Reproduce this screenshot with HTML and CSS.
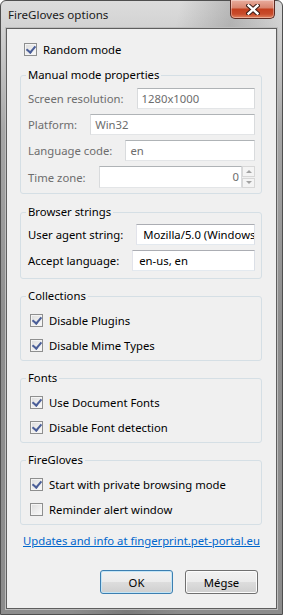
FILE: index.html
```html
<!DOCTYPE html>
<html lang="en">
<head>
    <meta charset="UTF-8">
    <title>FireGloves options</title>
    <link rel="stylesheet" href="styles.css">
</head>
<body>

<div class="window">
    <div class="titlebar">
        <span class="title">FireGloves options</span>
        <span class="close">
            <svg width="14" height="11" viewBox="0 0 14 11">
                <path d="M2.5 1.5 L11.5 9.5 M11.5 1.5 L2.5 9.5" stroke="#3a1a15" stroke-width="4.4" stroke-linecap="square"/>
                <path d="M2.5 1.5 L11.5 9.5 M11.5 1.5 L2.5 9.5" stroke="#fff" stroke-width="2.4" stroke-linecap="square"/>
            </svg>
        </span>
    </div>

    <div class="client">
        <div class="check first"><span class="box on"></span>Random mode</div>

        <!-- Manual mode (disabled while random mode is on) -->
        <fieldset class="group disabled">
            <legend>Manual mode properties</legend>
            <div class="rows">
                <div class="row"><span class="lbl">Screen resolution:</span><div class="field">1280x1000</div></div>
                <div class="row"><span class="lbl">Platform:</span><div class="field">Win32</div></div>
                <div class="row"><span class="lbl">Language code:</span><div class="field">en</div></div>
                <div class="row">
                    <span class="lbl">Time zone:</span>
                    <div class="field num">0</div>
                    <div class="spin">
                        <span class="arrow up"></span>
                        <span class="arrow down"></span>
                    </div>
                </div>
            </div>
        </fieldset>

        <fieldset class="group strings">
            <legend>Browser strings</legend>
            <div class="rows">
                <div class="row"><span class="lbl">User agent string:</span><div class="field">Mozilla/5.0 (Windows</div></div>
                <div class="row"><span class="lbl">Accept language:</span><div class="field">en-us, en</div></div>
            </div>
        </fieldset>

        <fieldset class="group checks">
            <legend>Collections</legend>
            <div class="check"><span class="box on"></span>Disable Plugins</div>
            <div class="check"><span class="box on"></span>Disable Mime Types</div>
        </fieldset>

        <fieldset class="group checks">
            <legend>Fonts</legend>
            <div class="check"><span class="box on"></span>Use Document Fonts</div>
            <div class="check"><span class="box on"></span>Disable Font detection</div>
        </fieldset>

        <fieldset class="group checks">
            <legend>FireGloves</legend>
            <div class="check"><span class="box on"></span>Start with private browsing mode</div>
            <div class="check"><span class="box"></span>Reminder alert window</div>
        </fieldset>

        <a class="link" href="#">Updates and info at fingerprint.pet-portal.eu</a>

        <div class="buttons">
            <button class="btn default">OK</button>
            <button class="btn">Mégse</button>
        </div>
    </div>
</div>

</body>
</html>
```

FILE: styles.css
```css
/* Reset */
* {
    margin: 0;
    padding: 0;
    box-sizing: border-box;
}
body {
    font-family: "Noto Sans", "Open Sans", sans-serif;
    font-size: 11.3px;
    color: #000;
    background: #fff;
}

/* Window frame */
.window {
    width: 283px;
    height: 615px;
    padding: 0 5px 6px;
    border: 1px solid #4f4f4f;
    border-radius: 6px 6px 0 0;
    display: flex;
    flex-direction: column;
    background:
        linear-gradient(100deg, rgba(255,255,255,0) 46%, rgba(60,60,60,0.22) 60%, rgba(255,255,255,0) 74%),
        linear-gradient(to bottom, #dcdcdc 0, #d2d2d2 28px, #a6a6a6 130px, #8e8e8e 320px, #8c8c8c 100%);
}
.titlebar {
    height: 27px;
    display: flex;
    align-items: flex-start;
    padding: 0 2px 0 2px;
}
.title {
    line-height: 28px;
    font-size: 11.6px;
    color: #1a1a1a;
}
.close {
    margin-left: auto;
    margin-top: -1px;
    width: 45px;
    height: 19px;
    display: flex;
    align-items: center;
    justify-content: center;
    border: 1px solid #5c2a22;
    border-top: none;
    border-radius: 0 0 5px 5px;
    background: linear-gradient(to bottom, #e9ad9e 0%, #d98670 42%, #c4401f 52%, #c84b2b 78%, #e0835f 100%);
    box-shadow: inset 0 0 0 1px rgba(255, 255, 255, 0.35);
}

/* Client area */
.client {
    flex: 1;
    display: flex;
    flex-direction: column;
    padding: 12px 14px 14px 13px;
    background: #f0f0f0;
    border: 1px solid #5e5e5e;
    box-shadow: 0 0 0 1px #bdbdbd;
}

/* Checkboxes */
.check {
    display: flex;
    align-items: center;
    gap: 6px;
    height: 17px;
    margin-left: 2px;
}
.check.first {
    height: 16px;
    margin-left: 4px;
    margin-bottom: 10px;
}
.box {
    flex: none;
    width: 13px;
    height: 13px;
    border: 1px solid #8e8f8f;
    background: linear-gradient(135deg, #dcdcdc, #fbfbfb);
    box-shadow: inset 0 0 0 1px #f4f4f4;
    position: relative;
}
.box.on::after {
    content: "";
    position: absolute;
    left: 2px;
    top: 0;
    width: 4px;
    height: 7px;
    border: solid #4a5e98;
    border-width: 0 2px 2px 0;
    transform: translateX(1px) rotate(40deg);
}

/* Group boxes */
.group {
    border: 1px solid #d5dfe5;
    border-radius: 3px;
    margin-top: 9px;
    min-width: 0;
}
.group.disabled {
    margin-top: 0;
    padding: 5px 6px 5px 7px;
}
.group.strings {
    margin-top: 10px;
    padding: 4px 6px 7px 7px;
}
.group.checks {
    padding: 8px 6px 6px 7px;
    display: flex;
    flex-direction: column;
    gap: 8px;
}
legend {
    line-height: 16px;
    padding: 0 2px;
    margin-left: -2px;
}
.rows {
    display: flex;
    flex-direction: column;
    gap: 5px;
}
.row {
    display: flex;
    align-items: center;
    gap: 13px;
}
.lbl {
    white-space: nowrap;
}
.field {
    flex: 1;
    min-width: 0;
    height: 21px;
    line-height: 19px;
    padding: 0 4px;
    background: #fff;
    border: 1px solid;
    border-color: #abadb3 #dbdfe6 #e3e9ef #e2e3ea;
    white-space: nowrap;
    overflow: hidden;
}
.group.strings .field {
    padding-left: 6px;
}
.field.num {
    text-align: right;
    padding-right: 2px;
    height: 22px;
}
.disabled .lbl,
.disabled .field {
    color: #6d6d6d;
}
.disabled .field {
    border-color: #afb3b6 #d9dbdd #e3e5e7 #d9dbdd;
}
.spin {
    width: 13px;
    height: 22px;
    margin-left: -13px;
    display: flex;
    flex-direction: column;
    gap: 1px;
}
.arrow {
    flex: 1;
    border: 1px solid #d7d7d7;
    background: #f4f4f4;
    display: flex;
    align-items: center;
    justify-content: center;
}
.arrow::after {
    content: "";
    border-left: 3px solid transparent;
    border-right: 3px solid transparent;
}
.arrow.up::after {
    border-bottom: 3px solid #a2a2a2;
}
.arrow.down::after {
    border-top: 3px solid #a2a2a2;
}

/* Link and buttons */
.link {
    margin: 8px 0 0 3px;
    line-height: 16px;
    color: #0066cc;
    text-decoration: underline;
    white-space: nowrap;
}
.buttons {
    margin-top: 21px;
    margin-right: 4px;
    display: flex;
    justify-content: flex-end;
    gap: 12px;
}
.btn {
    width: 73px;
    height: 24px;
    font: inherit;
    color: #000;
    border: 1px solid #707070;
    border-radius: 3px;
    background: linear-gradient(to bottom, #f2f2f2 0%, #ebebeb 49%, #dddddd 50%, #cfcfcf 100%);
    box-shadow: inset 0 0 0 1px #fcfcfc;
}
.btn.default {
    border-color: #3c7fb1;
    box-shadow: inset 0 0 0 1px #c4e5f6;
}
```
